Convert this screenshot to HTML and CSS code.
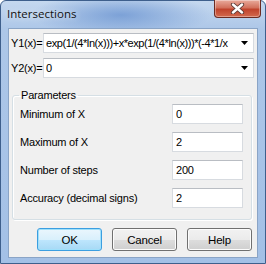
FILE: index.html
```html
<!DOCTYPE html>
<html lang="en">
<head>
  <meta charset="UTF-8" />
  <title>Intersections</title>
  <link rel="stylesheet" href="styles.css">
</head>
<body>
  <div class="window">
    <div class="titlebar">
      <span class="title">Intersections</span>
      <div class="close">
        <svg width="19" height="11" viewBox="0 0 19 11">
          <path d="M5 1.5 L14 9.5 M14 1.5 L5 9.5" stroke="#5a3a36" stroke-width="4.2" stroke-linecap="round"/>
          <path d="M5 1.5 L14 9.5 M14 1.5 L5 9.5" stroke="#ffffff" stroke-width="2.4" stroke-linecap="round"/>
        </svg>
      </div>
    </div>

    <div class="client">
      <div class="func-row">
        <span class="func-label">Y1(x)=</span>
        <div class="combo">
          <span class="combo-text long">exp(1/(4*ln(x)))+x*exp(1/(4*ln(x)))*(-4*1/x</span>
          <svg class="arrow" width="7" height="4" viewBox="0 0 7 4"><path d="M0 0 H7 L3.5 4 Z" fill="#000"/></svg>
        </div>
      </div>
      <div class="func-row second">
        <span class="func-label">Y2(x)=</span>
        <div class="combo">
          <span class="combo-text">0</span>
          <svg class="arrow" width="7" height="4" viewBox="0 0 7 4"><path d="M0 0 H7 L3.5 4 Z" fill="#000"/></svg>
        </div>
      </div>

      <fieldset class="params">
        <legend>Parameters</legend>
        <div class="param-row">
          <label>Minimum of X</label>
          <input type="text" value="0" />
        </div>
        <div class="param-row">
          <label>Maximum of X</label>
          <input type="text" value="2" />
        </div>
        <div class="param-row">
          <label>Number of steps</label>
          <input type="text" value="200" />
        </div>
        <div class="param-row">
          <label>Accuracy (decimal signs)</label>
          <input type="text" value="2" />
        </div>
      </fieldset>

      <div class="buttons">
        <button class="btn default">OK</button>
        <button class="btn">Cancel</button>
        <button class="btn">Help</button>
      </div>
    </div>
  </div>
</body>
</html>
```

FILE: styles.css
```css
* {
  box-sizing: border-box;
}
body {
  margin: 0;
  font-family: "Liberation Sans", Arial, sans-serif;
  font-size: 11px;
  letter-spacing: -0.2px;
  color: #000;
  background: #fff;
}
.window {
  width: 266px;
  height: 264px;
  border: 1px solid #3e5f8c;
  border-radius: 6px 6px 0 0;
  background:
    radial-gradient(ellipse 90px 22px at 120px 14px, rgba(104,146,208,0.75), rgba(104,146,208,0) 100%),
    linear-gradient(#c5d8ef, #adc7e8 28px, #a3c0e6);
  display: flex;
  flex-direction: column;
}
.titlebar {
  height: 27px;
  display: flex;
  align-items: flex-start;
}
.title {
  font-family: "Open Sans", "Noto Sans", sans-serif;
  font-size: 11.5px;
  letter-spacing: 0;
  color: #111;
  margin: 5px 0 0 6px;
  text-shadow: 0 0 6px rgba(255,255,255,0.9);
}
.close {
  margin-left: auto;
  margin-right: 4px;
  width: 47px;
  height: 18px;
  margin-top: -1px;
  border: 1px solid #6b2b22;
  border-top: none;
  border-radius: 0 0 4px 4px;
  background: linear-gradient(#e9ab9c, #d2715c 45%, #c0432c 55%, #d26a4f);
  box-shadow: inset 0 0 0 1px rgba(255,255,255,0.35);
  display: flex;
  align-items: center;
  justify-content: center;
}
.client {
  margin: 0 7px;
  height: 230px;
  background: #f0f0f0;
  border: 1px solid #8aa4c6;
  padding: 4px 3px 0 2px;
}
.func-row {
  display: flex;
  align-items: center;
  height: 20px;
}
.func-row.second {
  margin-top: 5px;
}
.func-label {
  width: 32px;
  white-space: nowrap;
}
.combo {
  flex: 1;
  height: 20px;
  background: #fff;
  border: 1px solid #d7dbe0;
  border-top-color: #b9bdc3;
  display: flex;
  align-items: center;
  padding: 0 5px 0 2px;
  overflow: hidden;
}
.combo-text {
  flex: 1;
  white-space: nowrap;
  overflow: hidden;
  margin-right: 4px;
}
.combo-text.long {
  letter-spacing: -0.42px;
}
.arrow {
  flex: none;
}
.params {
  margin: 11px 2px 0 1px;
  padding: 2px 8px 11px 7px;
  border: 1px solid #d5dfe5;
  border-radius: 3px;
  box-shadow: inset 1px 1px 0 #fff, 1px 1px 0 #fff;
}
.params legend {
  padding: 0 2px;
  margin-left: -1px;
  line-height: 13px;
}
.param-row {
  display: flex;
  align-items: center;
  justify-content: space-between;
  height: 20px;
}
.param-row + .param-row {
  margin-top: 8px;
}
.param-row input {
  width: 71px;
  height: 20px;
  margin: 0;
  border: 1px solid #d7dbe0;
  border-top-color: #b9bdc3;
  padding: 0 3px;
  font-family: inherit;
  font-size: 11px;
  letter-spacing: inherit;
  color: #000;
  background: #fff;
  outline: none;
}
.buttons {
  display: flex;
  justify-content: flex-end;
  gap: 10px;
  margin-top: 8px;
  padding-right: 2px;
}
.btn {
  width: 65px;
  height: 23px;
  margin: 0;
  padding: 0;
  font-family: inherit;
  font-size: 11.5px;
  letter-spacing: inherit;
  color: #000;
  border: 1px solid #707070;
  border-radius: 3px;
  background: linear-gradient(#f2f2f2, #ebebeb 50%, #dddddd 51%, #cfcfcf);
  box-shadow: inset 0 0 0 1px #fcfcfc;
}
.btn.default {
  border-color: #3c9ee0;
  background: linear-gradient(#eaf6fd, #d9f0fc 50%, #bee6fd 51%, #a7d9f5);
  box-shadow: inset 0 0 0 1px #9fe0fb;
}
```
